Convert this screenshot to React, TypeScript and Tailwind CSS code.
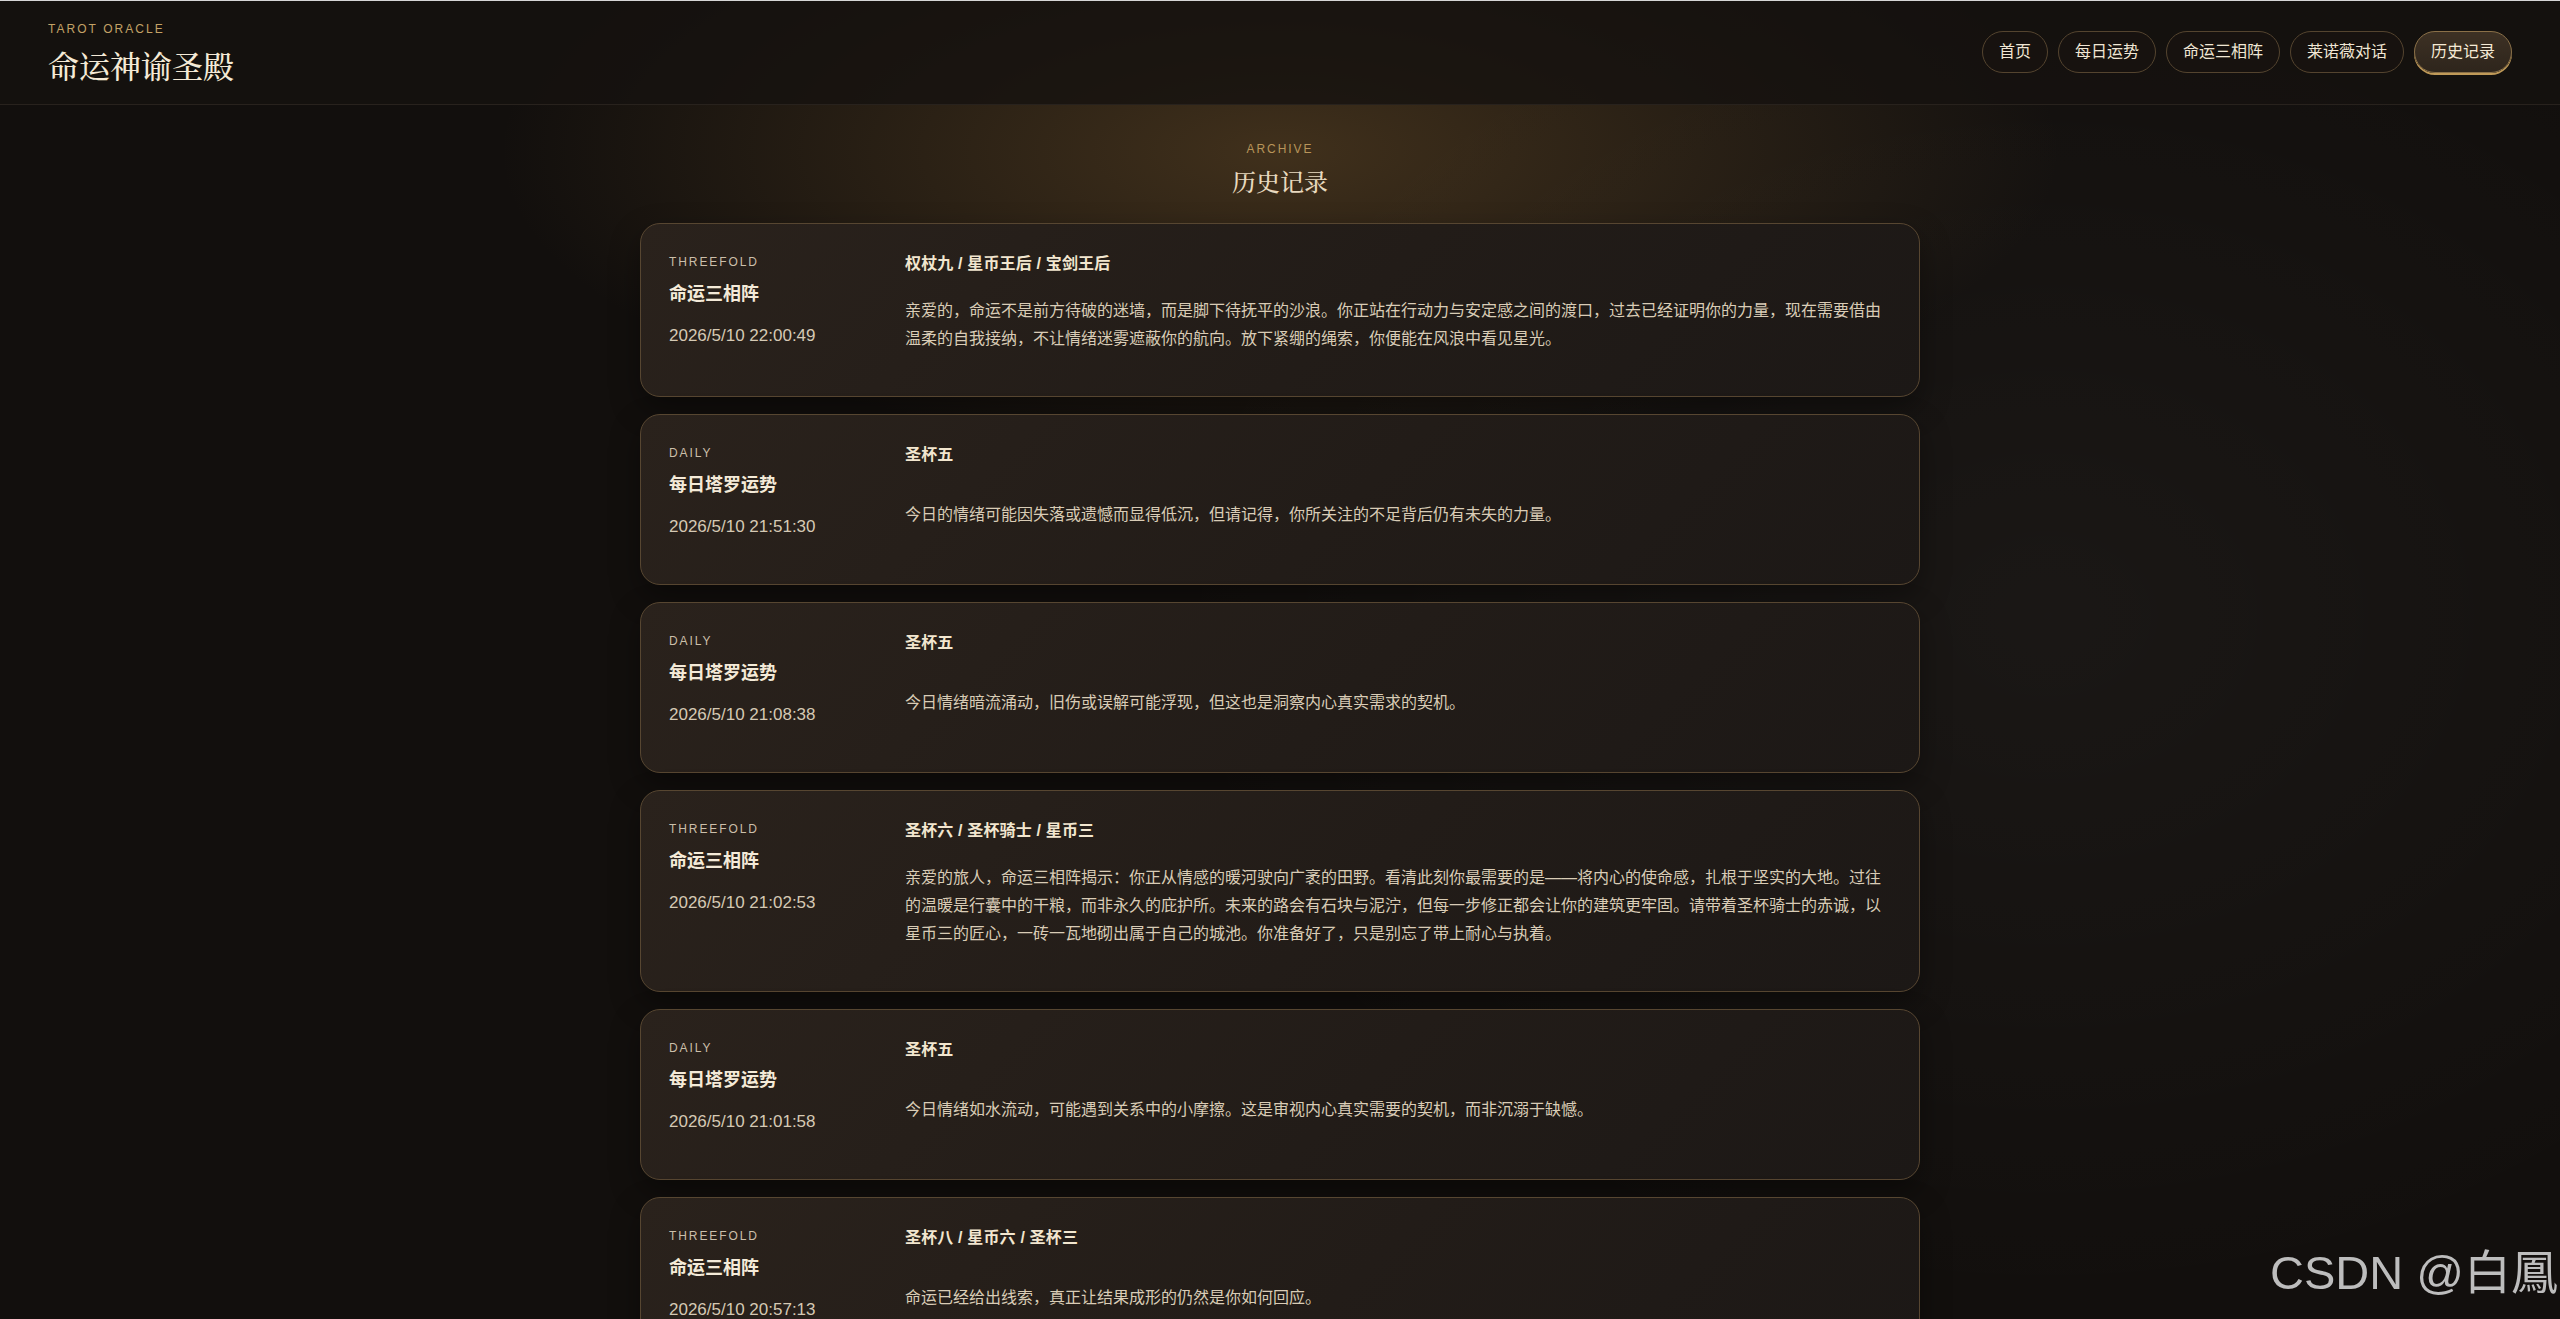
import React from 'react';

type Entry = {
  kind: 'THREEFOLD' | 'DAILY';
  title: string;
  time: string;
  cards: string;
  text: string;
};

const entries: Entry[] = [
  {
    kind: 'THREEFOLD',
    title: '命运三相阵',
    time: '2026/5/10 22:00:49',
    cards: '权杖九 / 星币王后 / 宝剑王后',
    text: '亲爱的，命运不是前方待破的迷墙，而是脚下待抚平的沙浪。你正站在行动力与安定感之间的渡口，过去已经证明你的力量，现在需要借由温柔的自我接纳，不让情绪迷雾遮蔽你的航向。放下紧绷的绳索，你便能在风浪中看见星光。',
  },
  {
    kind: 'DAILY',
    title: '每日塔罗运势',
    time: '2026/5/10 21:51:30',
    cards: '圣杯五',
    text: '今日的情绪可能因失落或遗憾而显得低沉，但请记得，你所关注的不足背后仍有未失的力量。',
  },
  {
    kind: 'DAILY',
    title: '每日塔罗运势',
    time: '2026/5/10 21:08:38',
    cards: '圣杯五',
    text: '今日情绪暗流涌动，旧伤或误解可能浮现，但这也是洞察内心真实需求的契机。',
  },
  {
    kind: 'THREEFOLD',
    title: '命运三相阵',
    time: '2026/5/10 21:02:53',
    cards: '圣杯六 / 圣杯骑士 / 星币三',
    text: '亲爱的旅人，命运三相阵揭示：你正从情感的暖河驶向广袤的田野。看清此刻你最需要的是——将内心的使命感，扎根于坚实的大地。过往的温暖是行囊中的干粮，而非永久的庇护所。未来的路会有石块与泥泞，但每一步修正都会让你的建筑更牢固。请带着圣杯骑士的赤诚，以星币三的匠心，一砖一瓦地砌出属于自己的城池。你准备好了，只是别忘了带上耐心与执着。',
  },
  {
    kind: 'DAILY',
    title: '每日塔罗运势',
    time: '2026/5/10 21:01:58',
    cards: '圣杯五',
    text: '今日情绪如水流动，可能遇到关系中的小摩擦。这是审视内心真实需要的契机，而非沉溺于缺憾。',
  },
  {
    kind: 'THREEFOLD',
    title: '命运三相阵',
    time: '2026/5/10 20:57:13',
    cards: '圣杯八 / 星币六 / 圣杯三',
    text: '命运已经给出线索，真正让结果成形的仍然是你如何回应。',
  },
  {
    kind: 'DAILY',
    title: '每日塔罗运势',
    time: '2026/5/10 20:41:07',
    cards: '星币侍从',
    text: '今日适合脚踏实地地学习与积累，小小的耐心会慢慢长成可靠的收获。',
  },
];

const navItems = ['首页', '每日运势', '命运三相阵', '莱诺薇对话', '历史记录'];

const HistoryCard: React.FC<{ entry: Entry }> = ({ entry }) => (
  <div className="min-h-[171px] rounded-[20px] border border-[#574631] bg-[linear-gradient(135deg,#2a221c_0%,#221c18_55%,#1c1816_100%)] px-7 py-7 shadow-[0_12px_30px_rgba(0,0,0,0.35)] grid grid-cols-[212px_1fr] gap-6">
    {/* left meta column */}
    <div className="mt-0.5 flex flex-col">
      <div className="text-xs leading-4 tracking-[0.16em] text-[#cbbfaa]">{entry.kind}</div>
      <div className="mt-2.5 text-lg leading-7 font-bold text-[#f4ead8]">{entry.title}</div>
      <div className="mt-4 text-[17px] leading-6 text-[#d5c9b4]">{entry.time}</div>
    </div>

    {/* reading */}
    <div className="flex flex-col">
      <div className="text-base leading-6 font-bold tracking-[0.01em] text-[#f2e6cf]">{entry.cards}</div>
      <div className="flex-1 flex items-center pt-[21px] pb-[15px]">
        <p className="text-base leading-7 text-[#d9ccb6]">{entry.text}</p>
      </div>
    </div>
  </div>
);

export default function App() {
  return (
    <div
      className="relative min-h-screen border-t border-t-[#d6d6d6] bg-[#120f0d] bg-[radial-gradient(ellipse_780px_300px_at_50%_150px,rgba(128,94,48,0.42),transparent),radial-gradient(ellipse_900px_700px_at_80%_38%,rgba(255,255,255,0.035),transparent)] text-[#f0e6d4]"
      style={{ fontFamily: '"Liberation Sans", "Noto Sans CJK SC", sans-serif' }}
    >
      {/* header */}
      <header className="flex items-center justify-between border-b border-[#28221d] bg-[#15110f]/80 px-12 pt-5 pb-[21px]">
        <div>
          <div className="text-xs leading-4 tracking-[0.17em] text-[#c3a266]">TAROT ORACLE</div>
          <div
            className="mt-2.5 text-[31px] leading-9 font-medium text-[#f5ead6]"
            style={{ fontFamily: '"Noto Serif CJK SC", "Noto Sans CJK SC", serif' }}
          >
            命运神谕圣殿
          </div>
        </div>
        <nav className="flex items-center gap-2.5">
          {navItems.map((item) => {
            const active = item === '历史记录';
            return (
              <button
                key={item}
                className={
                  active
                    ? 'rounded-full border border-[#8a7048] bg-[linear-gradient(180deg,#3d3124,#2e251c)] px-4 py-2 text-base leading-6 text-[#f5ead6] shadow-[0_2px_0_#c09a58]'
                    : 'rounded-full border border-[#54442f] bg-[#17120f] px-4 py-2 text-base leading-6 text-[#f0e6d4]'
                }
              >
                {item}
              </button>
            );
          })}
        </nav>
      </header>

      {/* archive */}
      <main className="px-4 pt-[36px] pb-16">
        <div className="text-center">
          <div className="text-xs leading-4 tracking-[0.16em] text-[#b8955a]">ARCHIVE</div>
          <h1
            className="mt-2 text-2xl leading-8 font-medium text-[#e8d9bf]"
            style={{ fontFamily: '"Noto Serif CJK SC", "Noto Sans CJK SC", serif' }}
          >
            历史记录
          </h1>
        </div>
        <div className="mx-auto mt-[26px] flex max-w-7xl flex-col gap-[17px]">
          {entries.map((e, i) => (
            <HistoryCard key={i} entry={e} />
          ))}
        </div>
      </main>

      {/* watermark */}
      <div className="fixed bottom-[23px] right-[2px] text-[47px] leading-none text-[#bdbdbd] pointer-events-none whitespace-nowrap">
        CSDN @白鳳
      </div>
    </div>
  );
}
